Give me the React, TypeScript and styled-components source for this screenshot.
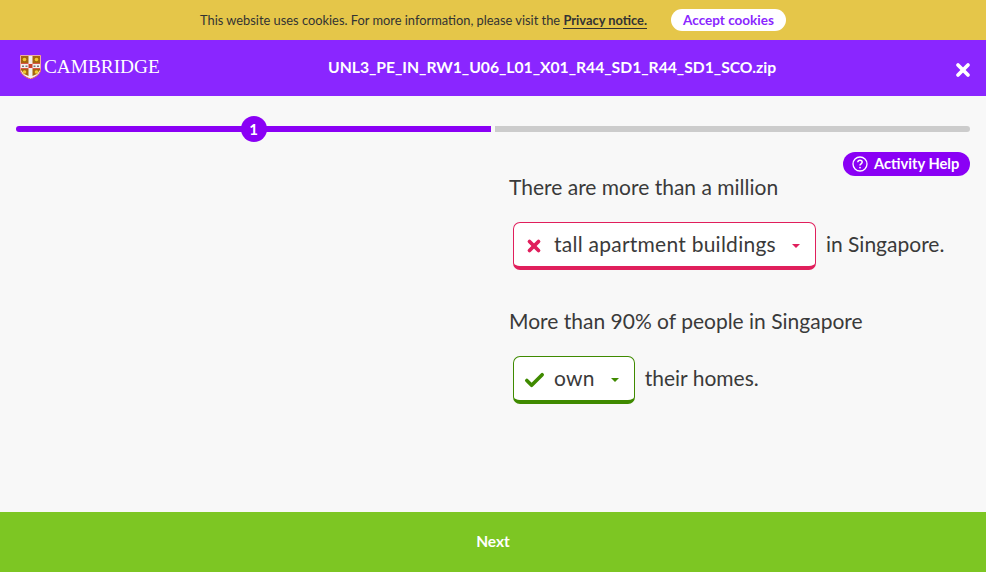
import React from "react";
import styled, { createGlobalStyle } from "styled-components";
import { X, Check } from "lucide-react";

const GlobalStyle = createGlobalStyle`
  html, body {
    margin: 0;
    padding: 0;
    height: 100%;
    background: #f8f8f8;
  }
  #root {
    height: 100%;
  }
  * {
    box-sizing: border-box;
  }
`;

const FONT = `"Lato", "Noto Sans", sans-serif`;

const Page = styled.div`
  display: flex;
  flex-direction: column;
  width: 986px;
  height: 572px;
  overflow: hidden;
  font-family: ${FONT};
  color: #3a3a3a;
`;

const CookieBar = styled.div`
  display: flex;
  align-items: center;
  justify-content: center;
  height: 40px;
  background: #e5c649;
  font-size: 12.85px;
  color: #333;
`;

const CookieText = styled.span`
  margin-right: 24px;
`;

const PrivacyLink = styled.a`
  font-weight: 700;
  color: #333;
  text-decoration: none;
  border-bottom: 1px solid #333;
`;

const AcceptButton = styled.button`
  height: 22px;
  width: 115px;
  padding: 0;
  border: 0;
  border-radius: 11px;
  background: #fff;
  color: #8a26ff;
  font-family: ${FONT};
  font-size: 13.5px;
  font-weight: 700;
`;

const Header = styled.header`
  display: flex;
  align-items: center;
  height: 56px;
  padding: 0 13px 2px 20px;
  background: #8a26ff;
  color: #fff;
`;

const Logo = styled.div`
  display: flex;
  align-items: center;
  gap: 3px;
  width: 308px;
`;

const LogoText = styled.span`
  font-family: "Liberation Serif", serif;
  font-size: 19.3px;
  line-height: 1;
`;

const FileName = styled.h1`
  margin: 0;
  flex: 1;
  font-size: 15.7px;
  font-weight: 700;
`;

const CloseButton = styled.button`
  display: flex;
  padding: 0;
  margin-top: 6px;
  border: 0;
  background: none;
  color: #fff;
`;

const Main = styled.main`
  flex: 1;
  padding: 20px 16px 0;
`;

const Progress = styled.div`
  display: flex;
  align-items: center;
  gap: 4px;
  height: 26px;
`;

const Track = styled.div<{ $active?: boolean }>`
  display: flex;
  align-items: center;
  justify-content: center;
  flex: 1;
  height: 6px;
  background: ${(p) => (p.$active ? "#8a00f5" : "#cccccc")};
  border-radius: ${(p) => (p.$active ? "3px 0 0 3px" : "0 3px 3px 0")};
`;

const StepDot = styled.span`
  display: flex;
  align-items: center;
  justify-content: center;
  flex: none;
  width: 26px;
  height: 26px;
  border-radius: 50%;
  background: #8a00f5;
  color: #fff;
  font-size: 15px;
  font-weight: 700;
`;

const HelpRow = styled.div`
  display: flex;
  justify-content: flex-end;
  margin-top: 10px;
`;

const HelpButton = styled.button`
  display: flex;
  align-items: center;
  gap: 6px;
  height: 24px;
  width: 127px;
  padding: 0 0 0 9px;
  border: 0;
  border-radius: 12px;
  background: #8a00f5;
  color: #fff;
  font-family: ${FONT};
  font-size: 14.7px;
  font-weight: 700;
  white-space: nowrap;
`;

const HelpLabel = styled.span`
  padding-bottom: 2px;
`;

const Activity = styled.section`
  margin-left: 493px;
  font-size: 21px;
`;

const Prompt = styled.p`
  margin: 0;
  height: 24px;
  line-height: 22px;
`;

const AnswerRow = styled.div`
  display: flex;
  align-items: center;
  gap: 10px;
  margin: 22px 0 40px 4px;
  height: 48px;
`;

const RowText = styled.span`
  padding-bottom: 5px;
`;

const Answer = styled.div<{ $color: string }>`
  display: flex;
  align-items: center;
  height: 48px;
  padding: 0 15px 0 10px;
  background: #fff;
  border: 1px solid ${(p) => p.$color};
  border-bottom-width: 4px;
  border-radius: 7px;
  color: ${(p) => p.$color};
`;

const AnswerIcon = styled.span`
  display: flex;
  justify-content: center;
  width: 20px;
  margin: 3px 10px 0 0;

  svg {
    flex: none;
  }
`;

const AnswerText = styled.span`
  padding-bottom: 3px;
  color: #3a3a3a;
  letter-spacing: 0.25px;
`;

const Caret = styled.span`
  width: 0;
  height: 0;
  margin: 2px 0 0 16px;
  border-left: 4px solid transparent;
  border-right: 4px solid transparent;
  border-top: 4px solid currentColor;
`;

const Footer = styled.footer`
  display: flex;
  align-items: center;
  justify-content: center;
  height: 60px;
  padding-bottom: 2px;
  background: #7dc623;
  color: #fff;
  font-size: 15.5px;
  font-weight: 700;
`;

const Shield = () => (
  <svg width="21" height="24" viewBox="0 0 21 24">
    <path d="M0 0h21v13c0 6-5 9-10.500 11C5 22 0 19 0 13z" fill="#f4f0ee" />
    <path d="M1 1h7.500v7H1zM12.500 1H20v7h-7.500z" fill="#a5640f" />
    <path d="M1 14h7.500v7L4 19 1 15zM12.500 14H20v1l-3 4-4.500 2z" fill="#a5640f" />
    <path d="M8.500 9h4v4h-4z" fill="#c8402c" />
    <path d="M1 13h7.500v1H1zM12.500 13H20v1h-7.500zM1 8h7.500v1H1zM12.500 8H20v1h-7.500z" fill="#d8584a" />
    <path d="M2 10.500h2v1.500H2zM5.500 10.500h2v1.500h-2zM13.500 10.500h2v1.500h-2zM17 10.500h2v1.500h-2z" fill="#777" />
    <circle cx="4.500" cy="4.500" r="1.800" fill="#f0c930" />
    <circle cx="16.500" cy="4.500" r="1.800" fill="#f0c930" />
    <circle cx="4.500" cy="17" r="1.800" fill="#f0c930" />
    <circle cx="16.500" cy="17" r="1.800" fill="#f0c930" />
    <path d="M0 0h21v13c0 6-5 9-10.500 11C5 22 0 19 0 13z" fill="none" stroke="#e8685a" strokeWidth="1" />
  </svg>
);

const HelpIcon = () => (
  <svg width="16" height="16" viewBox="0 0 16 16" fill="none" stroke="#fff">
    <circle cx="8" cy="8" r="7" strokeWidth="1.300" />
    <path d="M5.800 6.200C5.900 4.900 6.800 4.200 8 4.200c1.300 0 2.200.8 2.200 1.900 0 1.700-2.200 1.700-2.200 3.400" strokeWidth="1.500" />
    <circle cx="8" cy="11.600" r=".9" fill="#fff" stroke="none" />
  </svg>
);

const App = () => {
  return (
    <Page>
      <GlobalStyle />
      <CookieBar>
        <CookieText>
          This website uses cookies. For more information, please visit the{" "}
          <PrivacyLink href="#">Privacy notice.</PrivacyLink>
        </CookieText>
        <AcceptButton>Accept cookies</AcceptButton>
      </CookieBar>
      <Header>
        <Logo>
          <Shield />
          <LogoText>CAMBRIDGE</LogoText>
        </Logo>
        <FileName>UNL3_PE_IN_RW1_U06_L01_X01_R44_SD1_R44_SD1_SCO.zip</FileName>
        <CloseButton>
          <X size={20} strokeWidth={4.500} />
        </CloseButton>
      </Header>
      <Main>
        <Progress>
          <Track $active>
            <StepDot>1</StepDot>
          </Track>
          <Track />
        </Progress>
        <HelpRow>
          <HelpButton>
            <HelpIcon />
            <HelpLabel>Activity Help</HelpLabel>
          </HelpButton>
        </HelpRow>
        <Activity>
          <Prompt>There are more than a million</Prompt>
          <AnswerRow>
            <Answer $color="#e01f5c">
              <AnswerIcon>
                <X size={18} strokeWidth={5} />
              </AnswerIcon>
              <AnswerText>tall apartment buildings</AnswerText>
              <Caret />
            </Answer>
            <RowText>in Singapore.</RowText>
          </AnswerRow>
          <Prompt>More than 90% of people in Singapore</Prompt>
          <AnswerRow>
            <Answer $color="#3f8a00">
              <AnswerIcon>
                <Check size={23} strokeWidth={3.800} />
              </AnswerIcon>
              <AnswerText>own</AnswerText>
              <Caret />
            </Answer>
            <RowText>their homes.</RowText>
          </AnswerRow>
        </Activity>
      </Main>
      <Footer>Next</Footer>
    </Page>
  );
};

export default App;
